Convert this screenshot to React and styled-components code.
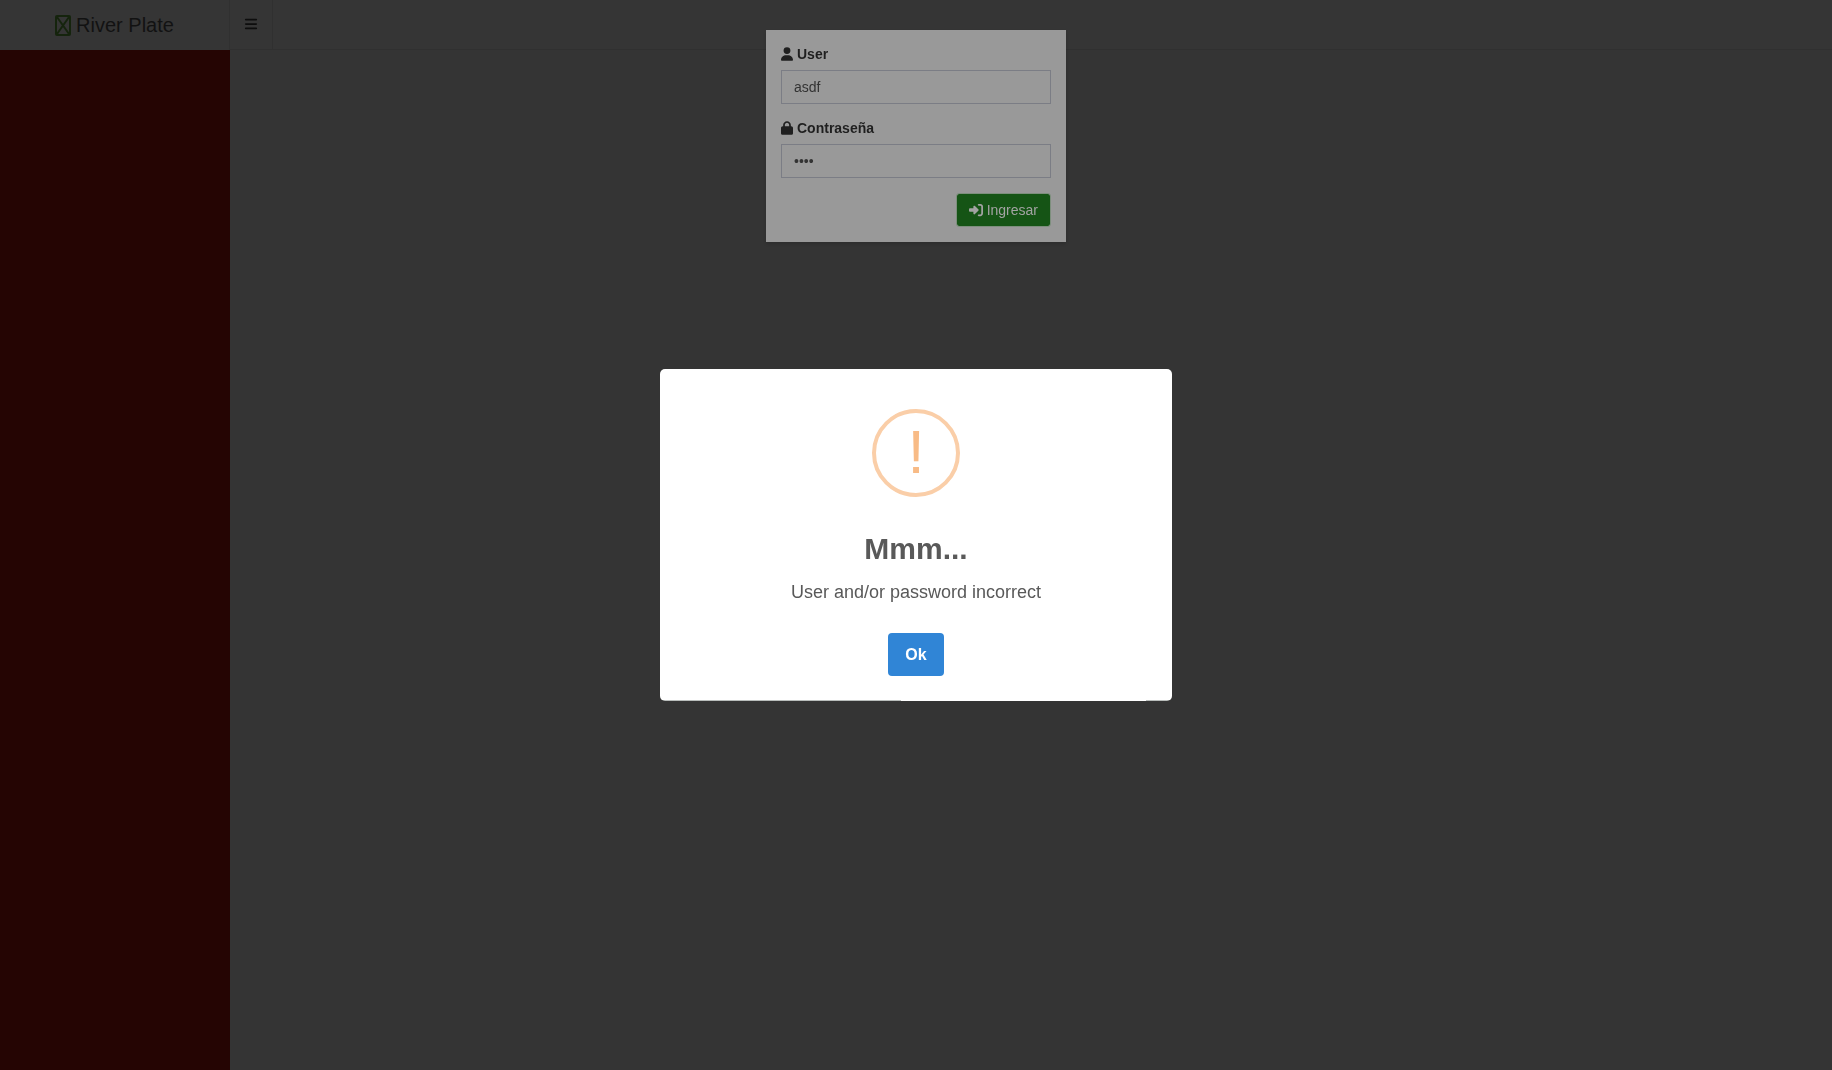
import React from "react";
import styled, { createGlobalStyle } from "styled-components";
import { FaUser, FaLock, FaRightToBracket, FaBars } from "react-icons/fa6";

const GlobalStyle = createGlobalStyle`
  *, *::before, *::after { box-sizing: border-box; }
  body {
    margin: 0;
    background: #343434;
    color: #1f1f1f;
    font: 14px/20px "Liberation Sans", Arial, sans-serif;
  }
`;

const Page = styled.div`
  display: flex;
  flex-direction: column;
  min-height: 100vh;
`;

const Header = styled.header`
  display: flex;
  height: 50px;
  background: #353535;
`;

const Logo = styled.a`
  display: flex;
  align-items: center;
  justify-content: center;
  gap: 5px;
  width: 230px;
  border-right: 1px solid #303030;
  color: #121212;
  font-size: 20px;
  line-height: 50px;
  text-decoration: none;
`;

const Navbar = styled.nav`
  display: flex;
  flex: 1;
  border-bottom: 1px solid #303030;
`;

const Toggle = styled.button`
  display: flex;
  align-items: center;
  justify-content: center;
  width: 43px;
  padding: 0 0 2px;
  border: 0;
  border-right: 1px solid #303030;
  background: transparent;
  color: #0d0d0d;
  font-size: 14px;
`;

const Body = styled.div`
  display: flex;
  flex: 1;
`;

const Sidebar = styled.aside`
  width: 230px;
  background: #250503;
`;

const Content = styled.main`
  flex: 1;
`;

const Layer = styled.div`
  position: fixed;
  inset: 0;
  display: flex;
  align-items: ${(p) => (p.$top ? "flex-start" : "center")};
  justify-content: center;
  padding: ${(p) => (p.$top ? "30px" : "10px")};
`;

const LoginForm = styled.form`
  display: flex;
  flex-direction: column;
  gap: 15px;
  width: 300px;
  padding: 15px;
  background: #999999;
  box-shadow: 0 2px 3px rgba(0, 0, 0, 0.13);
`;

const Field = styled.div`
  display: flex;
  flex-direction: column;
  gap: 7px;
`;

const Label = styled.label`
  display: flex;
  align-items: center;
  gap: 4px;
  line-height: 18px;
  font-weight: 700;

  svg {
    width: 12px;
    height: 14px;
  }
`;

const Input = styled.input`
  width: 100%;
  height: 34px;
  padding: 6px 12px;
  border: 1px solid #7b7d85;
  border-radius: 0;
  outline: 0;
  background: transparent;
  color: #333333;
  font: inherit;
`;

const Submit = styled.button`
  display: flex;
  align-items: center;
  align-self: flex-end;
  gap: 4px;
  height: 34px;
  padding: 0 12px;
  border: 1px solid #7d8f7d;
  border-radius: 3px;
  background: #155415;
  background-clip: padding-box;
  color: #a3a3a3;
  font: inherit;
`;

const Alert = styled.section`
  display: flex;
  flex-direction: column;
  align-items: center;
  width: 512px;
  max-width: 100%;
  padding: 40px 20px 25px;
  border-radius: 5px;
  background:
    linear-gradient(90deg, #b9bdbb 47%, #ffffff 47%, #ffffff 95%, #b9bdbb 95%) bottom / 100% 1px no-repeat,
    #ffffff;
  color: #595959;
  text-align: center;
`;

const WarningIcon = styled.div`
  display: flex;
  align-items: center;
  justify-content: center;
  width: 88px;
  height: 88px;
  border: 4px solid #facea8;
  border-radius: 50%;
  color: #f8bb86;
  font-size: 62px;
  line-height: 78px;
  padding-bottom: 2px;
`;

const Title = styled.h2`
  margin: 30px 0 0;
  font-size: 30px;
  line-height: 44px;
`;

const Message = styled.p`
  margin: 10px 0 0;
  font-size: 18px;
  line-height: 22px;
`;

const Confirm = styled.button`
  height: 43px;
  margin-top: 30px;
  padding: 0 17px;
  border: 0;
  border-radius: 4px;
  background: #3085d6;
  color: #ffffff;
  font: 700 16px/20px "Liberation Sans", Arial, sans-serif;
`;

function Crest() {
  return (
    <svg width="16" height="21" viewBox="0 0 16 21" fill="none" aria-hidden="true">
      <rect x="1" y="1" width="14" height="19" rx="1" stroke="#15240d" strokeWidth="2" />
      <path d="M2 2L14 19M14 2L2 19" stroke="#15240d" strokeWidth="2" />
    </svg>
  );
}

export default function App() {
  return (
    <>
      <GlobalStyle />
      <Page>
        <Header>
          <Logo href="#"><Crest />River Plate</Logo>
          <Navbar>
            <Toggle type="button" aria-label="Menu"><FaBars /></Toggle>
          </Navbar>
        </Header>
        <Body>
          <Sidebar />
          <Content />
        </Body>
      </Page>
      <Layer $top>
        <LoginForm>
          <Field>
            <Label htmlFor="user"><FaUser />User</Label>
            <Input id="user" type="text" defaultValue="asdf" />
          </Field>
          <Field>
            <Label htmlFor="password"><FaLock />Contraseña</Label>
            <Input id="password" type="password" defaultValue="asdf" />
          </Field>
          <Submit type="button"><FaRightToBracket size={14} />Ingresar</Submit>
        </LoginForm>
      </Layer>
      <Layer>
        <Alert role="alertdialog" aria-labelledby="alert-title">
          <WarningIcon>!</WarningIcon>
          <Title id="alert-title">Mmm...</Title>
          <Message>User and/or password incorrect</Message>
          <Confirm type="button">Ok</Confirm>
        </Alert>
      </Layer>
    </>
  );
}
